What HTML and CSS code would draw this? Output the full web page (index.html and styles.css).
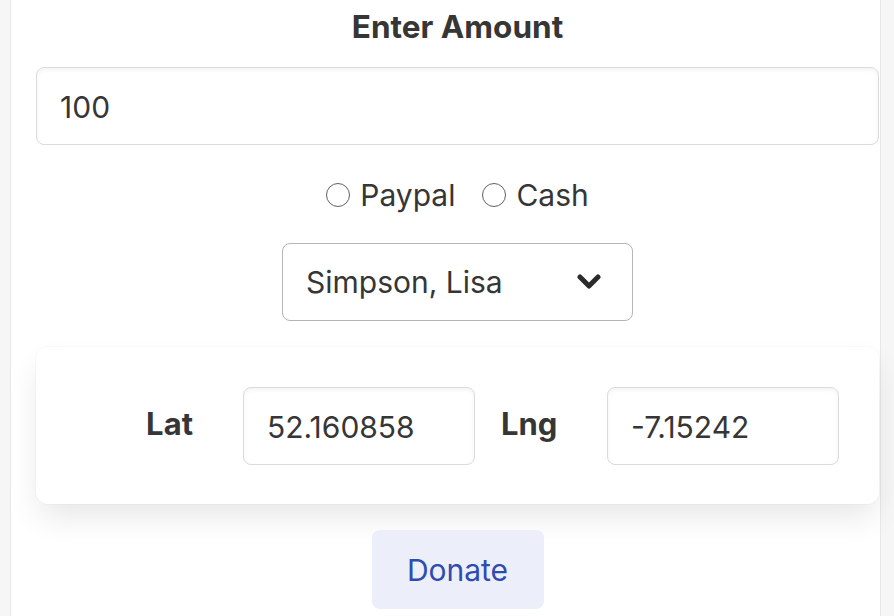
FILE: index.html
```html
<!DOCTYPE html>
<html>
<head>
<meta charset="utf-8">
<link rel="stylesheet" href="styles.css">
</head>
<body>
<div class="page">
  <label class="label">Enter Amount</label>
  <input class="input amount" type="text" value="100">
  <div class="radios">
    <label class="radio"><input type="radio" name="method"><span>Paypal</span></label>
    <label class="radio"><input type="radio" name="method"><span>Cash</span></label>
  </div>
  <div class="select-row">
    <div class="select">
      <span class="select-text">Simpson, Lisa</span>
      <svg class="chevron" width="24" height="16" viewBox="0 0 24 16"><path d="M3 3 L12 12 L21 3" fill="none" stroke="#2b2b2b" stroke-width="5" stroke-linecap="round" stroke-linejoin="round"/></svg>
    </div>
  </div>
  <div class="box">
    <div class="field-label lat">Lat</div>
    <input class="input coord" type="text" value="52.160858">
    <div class="field-label lng">Lng</div>
    <input class="input coord" type="text" value="-7.15242">
  </div>
  <div class="button-row">
    <button class="button">Donate</button>
  </div>
</div>
</body>
</html>
```
FILE: styles.css
```css
html, body {
  margin: 0;
  padding: 0;
  height: 100%;
  overflow: hidden;
}
body {
  background: #f6f6f6;
  font-family: Inter, Roboto, "Liberation Sans", sans-serif;
  color: #363636;
}
.page {
  box-sizing: border-box;
  margin-left: 10px;
  width: 871px;
  min-height: 100%;
  background: #fff;
  border-left: 1px solid #e8e8e8;
  border-right: 1px solid #e8e8e8;
  padding: 3px 1px 0 25px;
  display: flex;
  flex-direction: column;
}
.label {
  display: block;
  text-align: center;
  font-weight: 700;
  font-size: 31.5px;
  line-height: 48px;
  margin-bottom: 16px;
}
.input {
  box-sizing: border-box;
  font-family: Inter, Roboto, "Liberation Sans", sans-serif;
  font-size: 30px;
  color: #363636;
  border: 1px solid #dbdbdb;
  border-radius: 8px;
  box-shadow: inset 0 2px 4px rgba(10,10,10,0.05);
  height: 78px;
  padding: 2px 23px 0;
  outline: none;
  background: #fff;
}
.amount {
  width: 100%;
}
.radios {
  margin-top: 26px;
  display: flex;
  justify-content: center;
  gap: 27px;
  height: 48px;
  align-items: center;
  font-size: 30px;
}
.radio {
  display: flex;
  align-items: center;
  gap: 10px;
}
.radio input {
  appearance: none;
  -webkit-appearance: none;
  margin: 0;
  width: 24px;
  height: 24px;
  border: 1.6px solid #5f5f5f;
  border-radius: 50%;
  box-sizing: border-box;
  background: #fff;
}
.select-row {
  margin-top: 24px;
  display: flex;
  justify-content: center;
}
.select {
  box-sizing: border-box;
  width: 351px;
  height: 78px;
  border: 1.5px solid #b5b5b5;
  border-radius: 8px;
  display: flex;
  align-items: center;
  justify-content: space-between;
  padding: 0 31px 0 23px;
  font-size: 30px;
}
.chevron {
  display: block;
}
.box {
  margin-top: 26px;
  background: #fff;
  border-radius: 12px;
  box-shadow: 0 16px 32px -4px rgba(10,10,10,0.1), 0 0 0 1px rgba(10,10,10,0.02);
  padding: 40px 40px 39px;
  display: flex;
  align-items: center;
}
.field-label {
  font-weight: 700;
  font-size: 31px;
  text-align: right;
  margin-right: 50px;
  padding-bottom: 5px;
}
.lat {
  width: 117px;
}
.lng {
  margin-left: 26px;
  width: 56px;
}
.coord {
  width: 232px;
}
.button-row {
  margin-top: 26px;
  display: flex;
  justify-content: center;
}
.button {
  box-sizing: border-box;
  height: 79px;
  width: 172px;
  border: none;
  border-radius: 8px;
  background: #eceffa;
  color: #2f4bb0;
  font-family: Inter, Roboto, "Liberation Sans", sans-serif;
  font-size: 30px;
}
```
